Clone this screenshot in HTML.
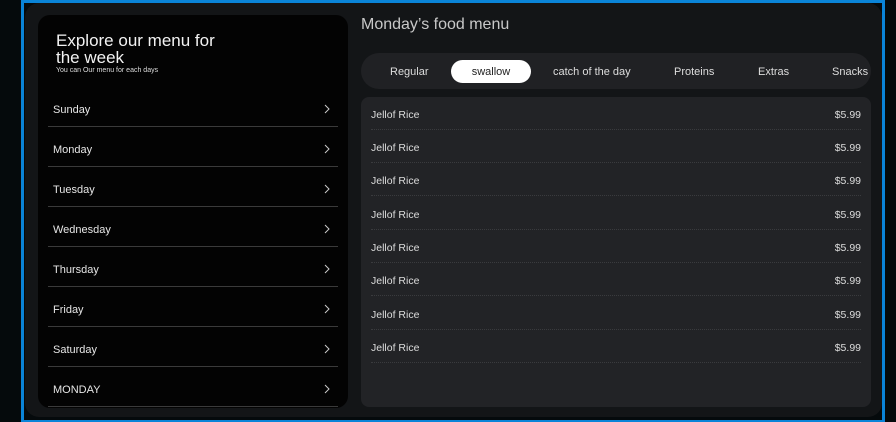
<!DOCTYPE html>
<html><head><style>
*{margin:0;padding:0;box-sizing:border-box}
body{width:896px;height:422px;background:#050a0c;font-family:"Liberation Sans",sans-serif;position:relative;overflow:hidden}
.frame{position:absolute;left:21px;top:0;width:864px;height:422px;border:3px solid #0a84d8;border-bottom-width:2px}
.panel{position:absolute;left:25px;top:3px;width:857px;height:414px;background:#131517;border-radius:14px}
.left{position:absolute;left:38px;top:15px;width:310px;height:393px;background:#030303;border-radius:12px;overflow:hidden}
.h{position:absolute;left:18px;top:17px;color:#f2f2f2;font-size:17px;line-height:17px}
.sub{position:absolute;left:18px;top:52px;color:#ddd;font-size:7px}
.row{position:absolute;left:10px;width:290px;height:40px;border-bottom:1px solid #3a3a3a;color:#e6e6e6;font-size:11px}
.row span{position:absolute;left:5px;top:17px}
.row svg{position:absolute;right:8px;top:17px}
.title{position:absolute;left:361px;top:16px;color:#c8c8c8;font-size:16px}
.tabs{position:absolute;left:361px;top:53px;width:510px;height:36px;background:#202124;border-radius:18px;overflow:hidden}
.tab{position:absolute;top:13px;color:#ddd;font-size:11px;white-space:nowrap}
.pill{position:absolute;left:90px;top:7px;width:80px;height:23px;background:#fff;border-radius:12px;color:#222;font-size:11px;text-align:center;line-height:25px}
.list{position:absolute;left:361px;top:97px;width:510px;height:310px;background:#222326;border-radius:8px}
.it{position:absolute;left:10px;width:490px;height:33px;border-bottom:1px dotted #3a3b3e;color:#ddd;font-size:10.5px}
.it span{position:absolute;left:0;top:12px}
.it b{position:absolute;right:0;top:12px;font-weight:normal}
</style></head><body>
<div class="frame"></div>
<div class="panel"></div>
<div class="left">
<div class="h">Explore our menu for<br>the week</div>
<div class="sub">You can Our menu for each days</div>
<div class="row" style="top:72px"><span>Sunday</span><svg width="6" height="10"><path d="M1 1l4 4-4 4" fill="none" stroke="#ccc" stroke-width="1"/></svg></div>
<div class="row" style="top:112px"><span>Monday</span><svg width="6" height="10"><path d="M1 1l4 4-4 4" fill="none" stroke="#ccc" stroke-width="1"/></svg></div>
<div class="row" style="top:152px"><span>Tuesday</span><svg width="6" height="10"><path d="M1 1l4 4-4 4" fill="none" stroke="#ccc" stroke-width="1"/></svg></div>
<div class="row" style="top:192px"><span>Wednesday</span><svg width="6" height="10"><path d="M1 1l4 4-4 4" fill="none" stroke="#ccc" stroke-width="1"/></svg></div>
<div class="row" style="top:232px"><span>Thursday</span><svg width="6" height="10"><path d="M1 1l4 4-4 4" fill="none" stroke="#ccc" stroke-width="1"/></svg></div>
<div class="row" style="top:272px"><span>Friday</span><svg width="6" height="10"><path d="M1 1l4 4-4 4" fill="none" stroke="#ccc" stroke-width="1"/></svg></div>
<div class="row" style="top:312px"><span>Saturday</span><svg width="6" height="10"><path d="M1 1l4 4-4 4" fill="none" stroke="#ccc" stroke-width="1"/></svg></div>
<div class="row" style="top:352px"><span>MONDAY</span><svg width="6" height="10"><path d="M1 1l4 4-4 4" fill="none" stroke="#ccc" stroke-width="1"/></svg></div>
</div>
<div class="title">Monday’s food menu</div>
<div class="tabs">
<div class="tab" style="left:29px">Regular</div>
<div class="pill">swallow</div>
<div class="tab" style="left:192px">catch of the day</div>
<div class="tab" style="left:313px">Proteins</div>
<div class="tab" style="left:397px">Extras</div>
<div class="tab" style="left:471px">Snacks</div>
</div>
<div class="list">
<div class="it" style="top:0"><span>Jellof Rice</span><b>$5.99</b></div>
<div class="it" style="top:33px"><span>Jellof Rice</span><b>$5.99</b></div>
<div class="it" style="top:66px"><span>Jellof Rice</span><b>$5.99</b></div>
<div class="it" style="top:100px"><span>Jellof Rice</span><b>$5.99</b></div>
<div class="it" style="top:133px"><span>Jellof Rice</span><b>$5.99</b></div>
<div class="it" style="top:166px"><span>Jellof Rice</span><b>$5.99</b></div>
<div class="it" style="top:200px"><span>Jellof Rice</span><b>$5.99</b></div>
<div class="it" style="top:233px"><span>Jellof Rice</span><b>$5.99</b></div>
</div>
</body></html>
